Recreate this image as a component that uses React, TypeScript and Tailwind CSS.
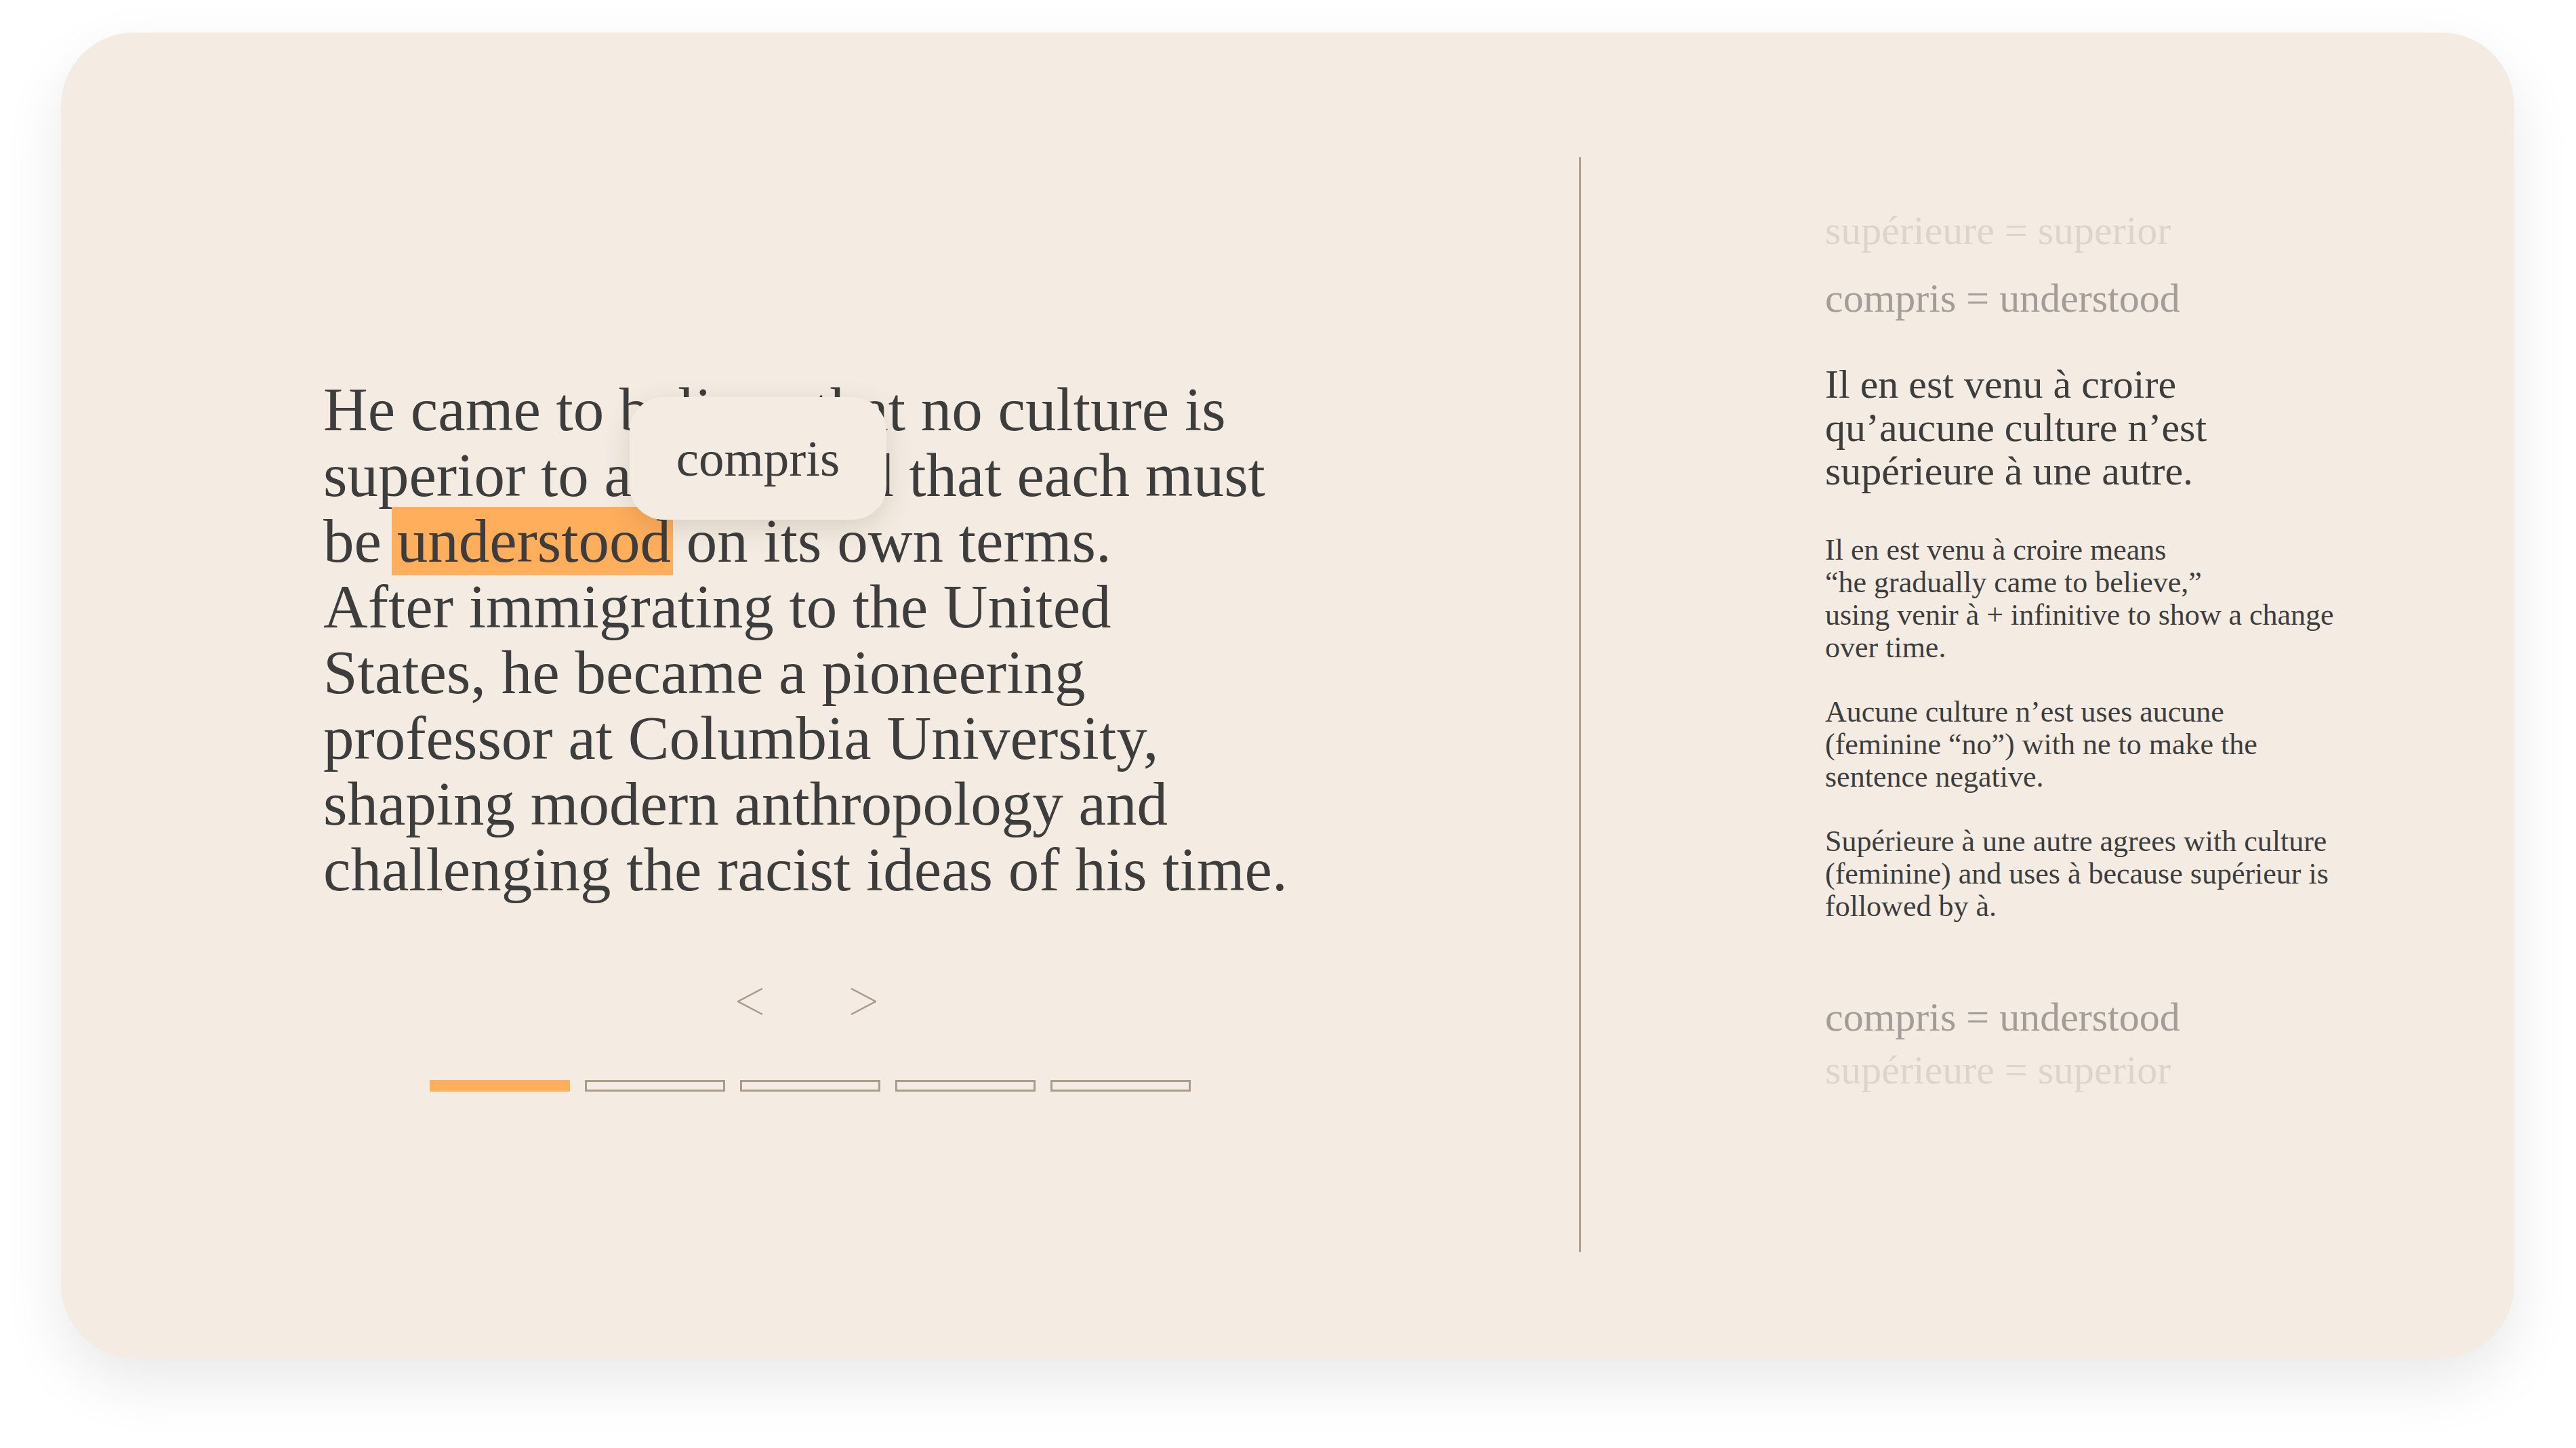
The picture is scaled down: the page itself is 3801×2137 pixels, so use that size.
import React from 'react';

// Reading card: sentence with a tapped word on the left, gloss notes on the right.

const SERIF = "font-['Liberation_Serif','Times_New_Roman',serif]";

const NOTES: string[][] = [
  [
    'Il en est venu à croire means',
    '“he gradually came to believe,”',
    'using venir à + infinitive to show a change',
    'over time.',
  ],
  [
    'Aucune culture n’est uses aucune',
    '(feminine “no”) with ne to make the',
    'sentence negative.',
  ],
  [
    'Supérieure à une autre agrees with culture',
    '(feminine) and uses à because supérieur is',
    'followed by à.',
  ],
];

function Chevron({ dir }: { dir: 'left' | 'right' }) {
  return (
    <svg width="38" height="40" viewBox="0 0 38 40" fill="none">
      <polyline
        points={dir === 'left' ? '37,1 1,20 37,39' : '1,1 37,20 1,39'}
        stroke="#ab9c89"
        strokeWidth="2.5"
      />
    </svg>
  );
}

function Reader() {
  return (
    <div className="w-[2240px] shrink-0 pl-[387px] pt-[508px]">
      <div className="w-[1427px] flex flex-col">
        <div className="relative text-[91px] leading-[97px] text-[#3d3d3d] whitespace-nowrap">
          <div>He came to believe that no culture is</div>
          <div>superior to another and that each must</div>
          <div>
            be <span className="bg-[#ffae5c] -ml-[8px] pl-[8px] pr-[3px] -mr-[3px]">understood</span> on its own terms.
          </div>
          <div>After immigrating to the United</div>
          <div>States, he became a pioneering</div>
          <div>professor at Columbia University,</div>
          <div>shaping modern anthropology and</div>
          <div>challenging the racist ideas of his time.</div>

          {/* word popover */}
          <div className="absolute left-[452px] top-[30px] w-[379px] h-[181px] rounded-[50px] bg-[#f4ece2] shadow-[0_12px_40px_rgba(60,40,20,0.14)] flex items-center justify-center">
            <span className="text-[75px] leading-[75px] text-[#3d3d3d]">compris</span>
          </div>
        </div>

        <div className="mt-[126px] flex justify-center gap-[129px]">
          <Chevron dir="left" />
          <Chevron dir="right" />
        </div>

        <div className="mt-[96px] flex justify-center gap-[22px] pl-[10px]">
          {[0, 1, 2, 3, 4].map((i) => (
            <div
              key={i}
              className={
                i === 0
                  ? 'w-[207px] h-[17px] bg-[#ffae5c]'
                  : 'w-[207px] h-[17px] border-[3px] border-[#ab9c89]'
              }
            />
          ))}
        </div>
      </div>
    </div>
  );
}

function Notes() {
  return (
    <div className="pl-[360px] pt-[260px] flex flex-col whitespace-nowrap">
      <div className="text-[60px] leading-[64px] text-[#ddd5cb]">supérieure = superior</div>
      <div className="mt-[36px] text-[60px] leading-[64px] text-[#a29d98]">compris = understood</div>

      <div className="mt-[63px] text-[60px] leading-[64px] text-[#3d3d3d]">
        <div>Il en est venu à croire</div>
        <div>qu’aucune culture n’est</div>
        <div>supérieure à une autre.</div>
      </div>

      <div className="mt-[61px] flex flex-col gap-[47px] text-[44px] leading-[48px] text-[#3d3d3d]">
        {NOTES.map((lines, i) => (
          <div key={i}>
            {lines.map((l) => (
              <div key={l}>{l}</div>
            ))}
          </div>
        ))}
      </div>

      <div className="mt-[107px] text-[60px] leading-[64px] text-[#a29d98]">compris = understood</div>
      <div className="mt-[14px] text-[60px] leading-[64px] text-[#ddd5cb]">supérieure = superior</div>
    </div>
  );
}

export default function App() {
  return (
    <div className={`w-[3801px] h-[2137px] bg-white overflow-hidden pt-[48px] pl-[90px] ${SERIF}`}>
      <div className="w-[3620px] h-[1956px] rounded-[108px] bg-[#f4ece2] shadow-[0_36px_90px_rgba(0,0,0,0.09)] flex">
        <Reader />
        <div className="w-[3px] h-[1616px] mt-[184px] bg-[#ae9f8f] shrink-0" />
        <Notes />
      </div>
    </div>
  );
}
